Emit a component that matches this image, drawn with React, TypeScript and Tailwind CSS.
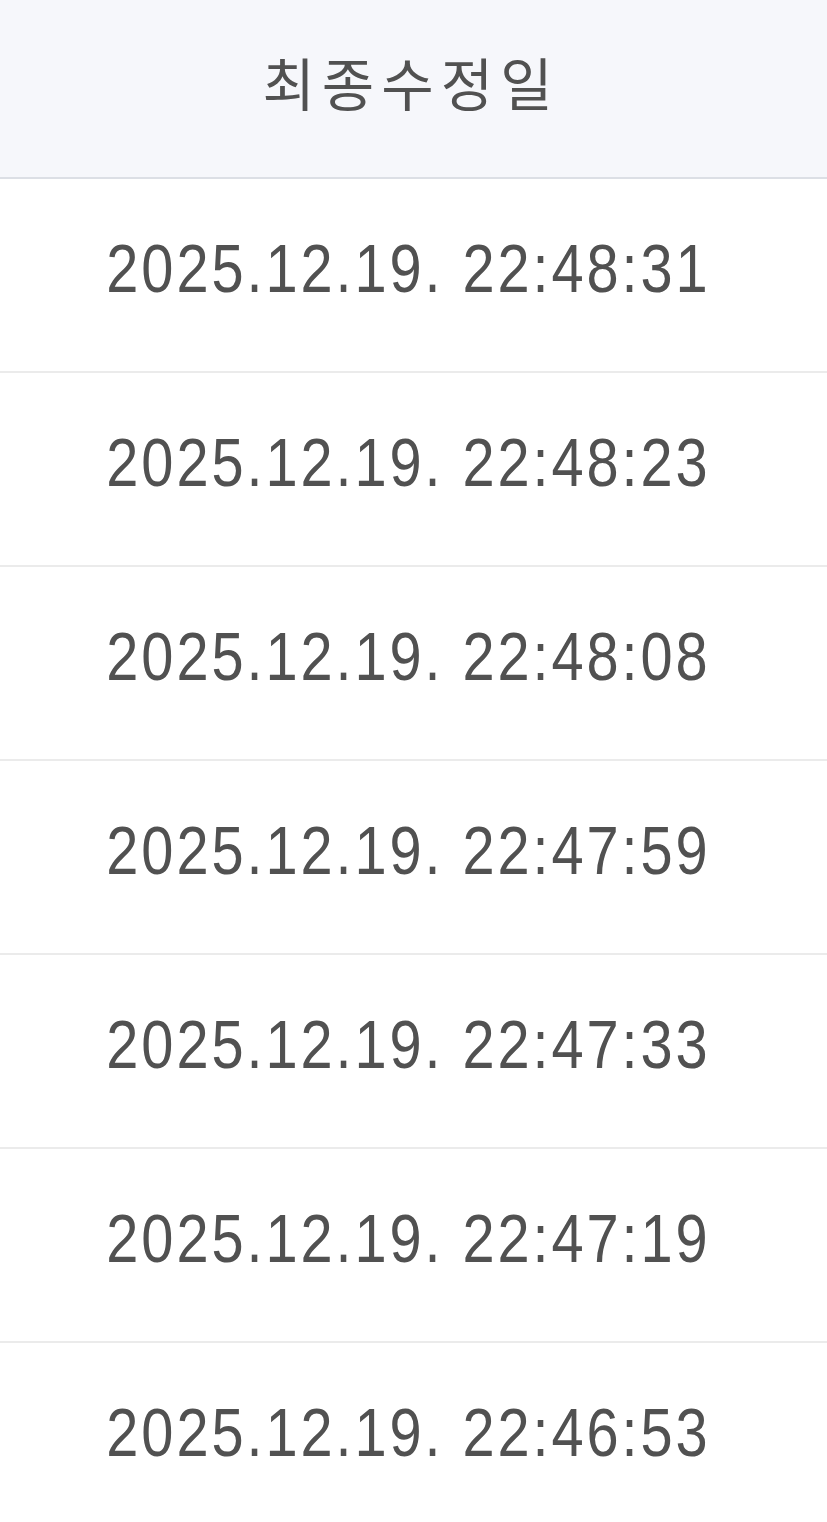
import React from "react";

const rows = [
  "2025.12.19. 22:48:31",
  "2025.12.19. 22:48:23",
  "2025.12.19. 22:48:08",
  "2025.12.19. 22:47:59",
  "2025.12.19. 22:47:33",
  "2025.12.19. 22:47:19",
  "2025.12.19. 22:46:53",
];

export default function App() {
  return (
    <div className="w-[827px] h-[1522px] overflow-hidden bg-white text-[#515151]" style={{ fontFamily: '"Liberation Sans", "Noto Sans CJK KR", sans-serif' }}>
      <div className="h-[179px] bg-[#f6f7fb] border-b-2 border-[#dcdfe5] flex items-center justify-center">
        <span className="text-[57px] leading-none pb-[14px] tracking-[7px] pr-[5px]" style={{ fontFamily: '"Noto Sans CJK KR", sans-serif' }}>최종수정일</span>
      </div>
      {rows.map((r) => (
        <div key={r} className="h-[194px] border-b-2 border-[#ebebeb] flex items-center justify-center">
          <span className="text-[68px] leading-none tracking-[3.4px] scale-x-[0.85] pb-[15px] mr-[10px] whitespace-nowrap">{r}</span>
        </div>
      ))}
    </div>
  );
}
